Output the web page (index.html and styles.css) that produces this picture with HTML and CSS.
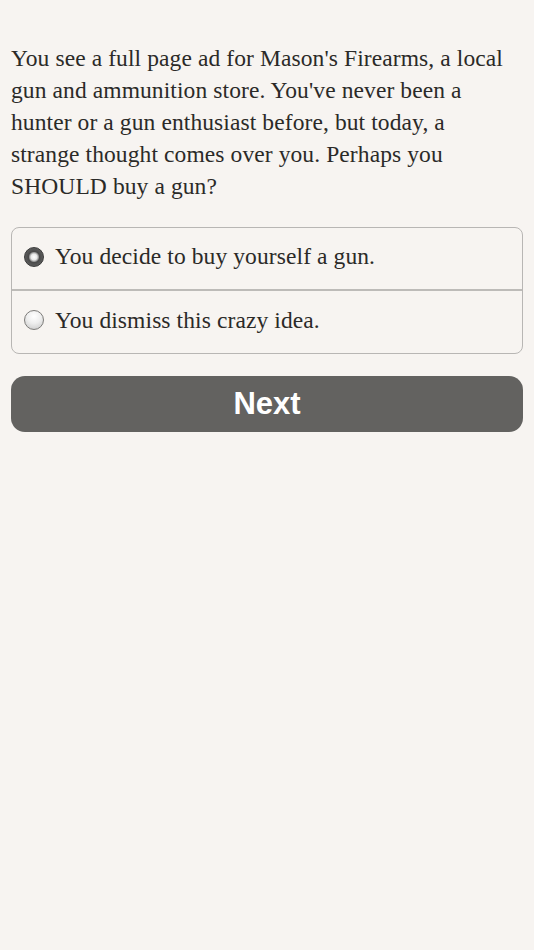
FILE: index.html
```html
<!DOCTYPE html>
<html>
<head>
    <meta name="viewport" content="width=device-width, initial-scale=1.0">
    <title>Mason's Firearms</title>
    <link rel="stylesheet" href="styles.css">
</head>
<body>
    <div class="page">
        <p class="story">You see a full page ad for Mason's Firearms, a local gun and ammunition store. You've never been a hunter or a gun enthusiast before, but today, a strange thought comes over you. Perhaps you SHOULD buy a gun?</p>
        <div class="choices">
            <label class="choice">
                <span class="radio checked"></span>
                <span>You decide to buy yourself a gun.</span>
            </label>
            <label class="choice">
                <span class="radio"></span>
                <span>You dismiss this crazy idea.</span>
            </label>
        </div>
        <button class="next">Next</button>
    </div>
</body>
</html>
```

FILE: styles.css
```css
body {
    margin: 0;
    background-color: #f7f4f1;
    font-family: "Liberation Serif", serif;
    color: #2b2a28;
}
.page {
    padding: 42px 11px 0;
}
.story {
    margin: 0;
    padding-right: 14px;
    font-size: 23.5px;
    letter-spacing: 0.1px;
    line-height: 32px;
}
.choices {
    margin-top: 25px;
    border: 1px solid #b8b6b4;
    border-radius: 8px;
}
.choice {
    display: flex;
    align-items: center;
    gap: 11px;
    box-sizing: border-box;
    height: 61px;
    padding: 0 12px 4px;
    font-size: 23.5px;
    letter-spacing: 0.1px;
}
.choice + .choice {
    height: 64px;
    border-top: 2px solid #bdbbb8;
}
.radio {
    flex: none;
    width: 20px;
    height: 20px;
    box-sizing: border-box;
    border-radius: 50%;
    border: 1px solid #7d7c7a;
    background: radial-gradient(circle at 50% 30%, #ffffff 0%, #eeeeee 45%, #c4c4c4 100%);
}
.radio.checked {
    border-color: #3a3a3a;
    background: radial-gradient(circle at 50% 50%, #ffffff 0, #e8e8e8 3px, #9a9a9a 4.5px, #4a4a4a 5.5px, #6e6e6e 100%);
}
.next {
    display: block;
    width: 100%;
    height: 56px;
    margin-top: 22px;
    border: none;
    border-radius: 14px;
    background-color: #636260;
    color: #fff;
    font-family: "Liberation Sans", Arial, sans-serif;
    font-size: 31px;
    font-weight: bold;
}
```
